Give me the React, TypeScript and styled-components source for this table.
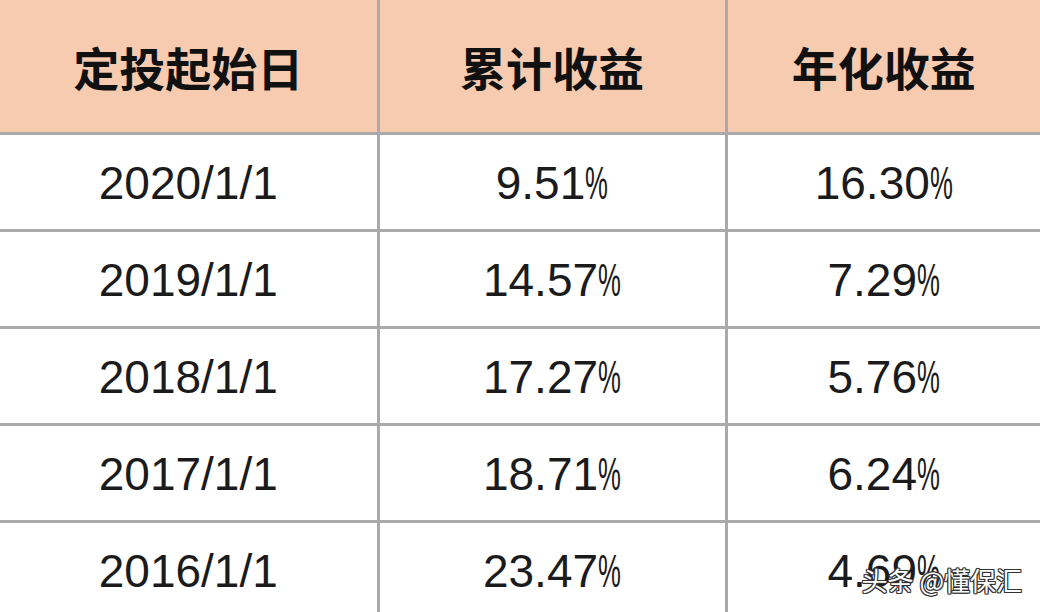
import React from 'react'
import styled, { createGlobalStyle } from 'styled-components'

const GlobalStyle = createGlobalStyle`
    html, body {
        margin: 0;
        padding: 0;
        background: #ffffff;
        overflow: hidden;
    }
`

const Frame = styled.div`
    position: relative;
    width: 1040px;
    height: 612px;
    overflow: hidden;
    background: #ffffff;
`

const StyledTable = styled.table`
    width: 1040px;
    border-collapse: collapse;
    border-style: hidden;
    table-layout: fixed;
    font-family: "Liberation Sans", Arial, "Noto Sans CJK SC", sans-serif;
    color: #1b1b1b;
`

const StyledThead = styled.thead`
    background-color: #F6CBB0;
    th {
        height: 132px;
        padding: 0;
        border: 3px solid #ABA9A9;
        font-family: "Noto Sans CJK SC", sans-serif;
        font-size: 46px;
        font-weight: 700;
        color: #111111;
        text-align: center;
        vertical-align: middle;
    }
`

const StyledTbody = styled.tbody`
    background-color: white;
    td {
        height: 92px;
        padding: 2px 0 0 0;
        border: 3px solid #ABA9A9;
        font-size: 46px;
        text-align: center;
        vertical-align: middle;
    }
`

// the % sign in the picture is a narrow, condensed glyph
const Pct = styled.span`
    display: inline-block;
    transform: scaleX(0.56);
    transform-origin: left center;
    margin-right: -0.39em;
`

const Watermark = styled.div`
    position: absolute;
    right: 18px;
    bottom: 19px;
    font-family: "Noto Sans CJK SC", sans-serif;
    font-size: 26px;
    line-height: 1;
    color: #ffffff;
    text-shadow:
        1px 0 0 #333, -1px 0 0 #333, 0 1px 0 #333, 0 -1px 0 #333,
        1px 1px 0 #333, -1px -1px 0 #333, 1px -1px 0 #333, -1px 1px 0 #333;
`

const rows = [
    { date: '2020/1/1', total: '9.51', annual: '16.30' },
    { date: '2019/1/1', total: '14.57', annual: '7.29' },
    { date: '2018/1/1', total: '17.27', annual: '5.76' },
    { date: '2017/1/1', total: '18.71', annual: '6.24' },
    { date: '2016/1/1', total: '23.47', annual: '4.69' },
]

const Percent = ({ value }: { value: string }) => (
    <>
        {value}
        <Pct>%</Pct>
    </>
)

const App: React.FunctionComponent = () => {
    return (
        <Frame>
            <GlobalStyle />
            <StyledTable>
                <colgroup>
                    <col style={{ width: 378 }} />
                    <col style={{ width: 348 }} />
                    <col />
                </colgroup>
                <StyledThead>
                    <tr>
                        <th>定投起始日</th>
                        <th>累计收益</th>
                        <th>年化收益</th>
                    </tr>
                </StyledThead>
                <StyledTbody>
                    {rows.map(row =>
                        <tr key={row.date}>
                            <td>{row.date}</td>
                            <td><Percent value={row.total} /></td>
                            <td><Percent value={row.annual} /></td>
                        </tr>
                    )}
                </StyledTbody>
            </StyledTable>
            <Watermark>头条 @懂保汇</Watermark>
        </Frame>
    )
}

export default App
